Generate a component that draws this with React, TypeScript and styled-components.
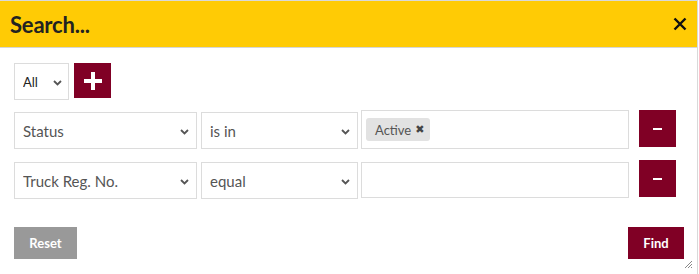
import React from "react";
import styled, { createGlobalStyle } from "styled-components";

const GlobalStyle = createGlobalStyle`
  html, body { margin: 0; padding: 0; background: #fff; }
  body { font-family: Lato, "Open Sans", Arial, sans-serif; }
  * { box-sizing: border-box; }
`;

const BURGUNDY = "#800025";

const Dialog = styled.div`
  position: relative;
  width: 698px;
  height: 274px;
  border-top: 1px solid #d9d9d9;
  border-right: 1px solid #d9d9d9;
  background: #fff;
`;

const Header = styled.div`
  height: 47px;
  background: #ffcb05;
  border-bottom: 1px solid #d6d6d6;
  display: flex;
  align-items: center;
  justify-content: space-between;
  padding: 0 10px 0 10px;
`;

const Title = styled.h2`
  margin: 0;
  font-family: Lato, sans-serif;
  font-weight: 700;
  font-size: 22px;
  color: #222;
  letter-spacing: -0.2px;
`;

const CloseButton = styled.button`
  border: none;
  background: transparent;
  padding: 0;
  width: 14px;
  height: 14px;
  display: flex;
  cursor: pointer;
`;

const Body = styled.div`
  padding: 15px 14px 0 14px;
`;

const Row = styled.div<{ $mt?: number }>`
  display: flex;
  align-items: flex-start;
  margin-top: ${(p) => p.$mt ?? 0}px;
`;

const SelectWrap = styled.div<{ $w: number; $mt?: number; $ml?: number }>`
  position: relative;
  width: ${(p) => p.$w}px;
  height: 37px;
  margin-top: ${(p) => p.$mt ?? 0}px;
  margin-left: ${(p) => p.$ml ?? 0}px;
  flex: none;
`;

const Select = styled.select<{ $small?: boolean }>`
  appearance: none;
  -webkit-appearance: none;
  width: 100%;
  height: 100%;
  border: 1px solid #dcdcdc;
  background: #fff;
  border-radius: 0;
  font-family: Lato, sans-serif;
  font-size: ${(p) => (p.$small ? "13px" : "15px")};
  color: ${(p) => (p.$small ? "#222" : "#555")};
  padding: 0 24px 0 8px;
  outline: none;
`;

const Chevron = styled.svg<{ $right: number }>`
  position: absolute;
  right: ${(p) => p.$right}px;
  top: 50%;
  margin-top: -2px;
  pointer-events: none;
`;

const SquareButton = styled.button<{ $h: number; $ml: number }>`
  width: 37px;
  height: ${(p) => p.$h}px;
  margin-left: ${(p) => p.$ml}px;
  background: ${BURGUNDY};
  border: none;
  padding: 0;
  display: flex;
  align-items: center;
  justify-content: center;
  flex: none;
  cursor: pointer;
`;

const ValueBox = styled.div<{ $h: number; $mt: number }>`
  width: 268px;
  height: ${(p) => p.$h}px;
  margin-top: ${(p) => p.$mt}px;
  margin-left: 3px;
  border: 1px solid #dcdcdc;
  padding: 7px 4px;
  display: flex;
  align-items: flex-start;
  flex: none;
`;

const Tag = styled.span`
  display: inline-flex;
  align-items: center;
  height: 23px;
  padding: 0 6px 0 9px;
  background: #e2e2e2;
  border-radius: 3px;
  font-size: 13px;
  color: #555;
  gap: 4px;
`;

const TagX = styled.span`
  font-size: 11px;
  font-weight: 700;
  color: #444;
  font-family: "DejaVu Sans", sans-serif;
  margin-top: -1px;
`;

const Footer = styled.div`
  display: flex;
  justify-content: space-between;
  margin-top: 28px;
  width: 670px;
`;

const ActionButton = styled.button<{ $bg: string; $w: number }>`
  width: ${(p) => p.$w}px;
  height: 32px;
  background: ${(p) => p.$bg};
  color: #fff;
  border: none;
  font-family: Lato, sans-serif;
  font-weight: 700;
  font-size: 13px;
  padding: 0;
  cursor: pointer;
`;

const Grip = styled.svg`
  position: absolute;
  right: 4px;
  bottom: 5px;
`;

const ChevronIcon = ({ right }: { right: number }) => (
  <Chevron $right={right} width="9" height="6" viewBox="0 0 9 6">
    <path d="M1 1l3.5 3.5L8 1" fill="none" stroke="#555" strokeWidth="1.8" />
  </Chevron>
);

const Minus = () => (
  <svg width="9" height="2" viewBox="0 0 9 2">
    <rect x="0" y="0" width="9" height="2" fill="#fff" />
  </svg>
);

export default function App() {
  return (
    <>
      <GlobalStyle />
      <Dialog>
        <Header>
          <Title>Search...</Title>
          <CloseButton aria-label="Close">
            <svg width="14" height="14" viewBox="0 0 14 14">
              <path d="M1.5 1.5l11 11M12.5 1.5l-11 11" stroke="#111" strokeWidth="2.4" />
            </svg>
          </CloseButton>
        </Header>
        <Body>
          <Row>
            <SelectWrap $w={55}>
              <Select $small defaultValue="All">
                <option>All</option>
                <option>Any</option>
              </Select>
              <ChevronIcon right={7} />
            </SelectWrap>
            <SquareButton $h={35} $ml={5} aria-label="Add">
              <svg width="18" height="18" viewBox="0 0 18 18">
                <rect x="7" y="0" width="4" height="18" fill="#fff" />
                <rect x="0" y="7" width="18" height="4" fill="#fff" />
              </svg>
            </SquareButton>
          </Row>
          <Row $mt={10}>
            <SelectWrap $w={183} $mt={2}>
              <Select defaultValue="Status">
                <option>Status</option>
                <option>Truck Reg. No.</option>
              </Select>
              <ChevronIcon right={8} />
            </SelectWrap>
            <SelectWrap $w={157} $mt={2} $ml={4}>
              <Select defaultValue="is in">
                <option>is in</option>
                <option>equal</option>
              </Select>
              <ChevronIcon right={8} />
            </SelectWrap>
            <ValueBox $h={39} $mt={0}>
              <Tag>
                Active <TagX>✖</TagX>
              </Tag>
            </ValueBox>
            <SquareButton $h={37} $ml={10} aria-label="Remove">
              <Minus />
            </SquareButton>
          </Row>
          <Row $mt={11}>
            <SelectWrap $w={183} $mt={2}>
              <Select defaultValue="Truck Reg. No.">
                <option>Status</option>
                <option>Truck Reg. No.</option>
              </Select>
              <ChevronIcon right={8} />
            </SelectWrap>
            <SelectWrap $w={157} $mt={2} $ml={4}>
              <Select defaultValue="equal">
                <option>is in</option>
                <option>equal</option>
              </Select>
              <ChevronIcon right={8} />
            </SelectWrap>
            <ValueBox $h={36} $mt={2} />
            <SquareButton $h={37} $ml={10} aria-label="Remove">
              <Minus />
            </SquareButton>
          </Row>
          <Footer>
            <ActionButton $bg="#999999" $w={63}>Reset</ActionButton>
            <ActionButton $bg={BURGUNDY} $w={56}>Find</ActionButton>
          </Footer>
        </Body>
        <Grip width="9" height="9" viewBox="0 0 9 9">
          <path d="M8 1L1 8M8 4L4 8M8 7L7 8" stroke="#888" strokeWidth="1" />
        </Grip>
      </Dialog>
    </>
  );
}
